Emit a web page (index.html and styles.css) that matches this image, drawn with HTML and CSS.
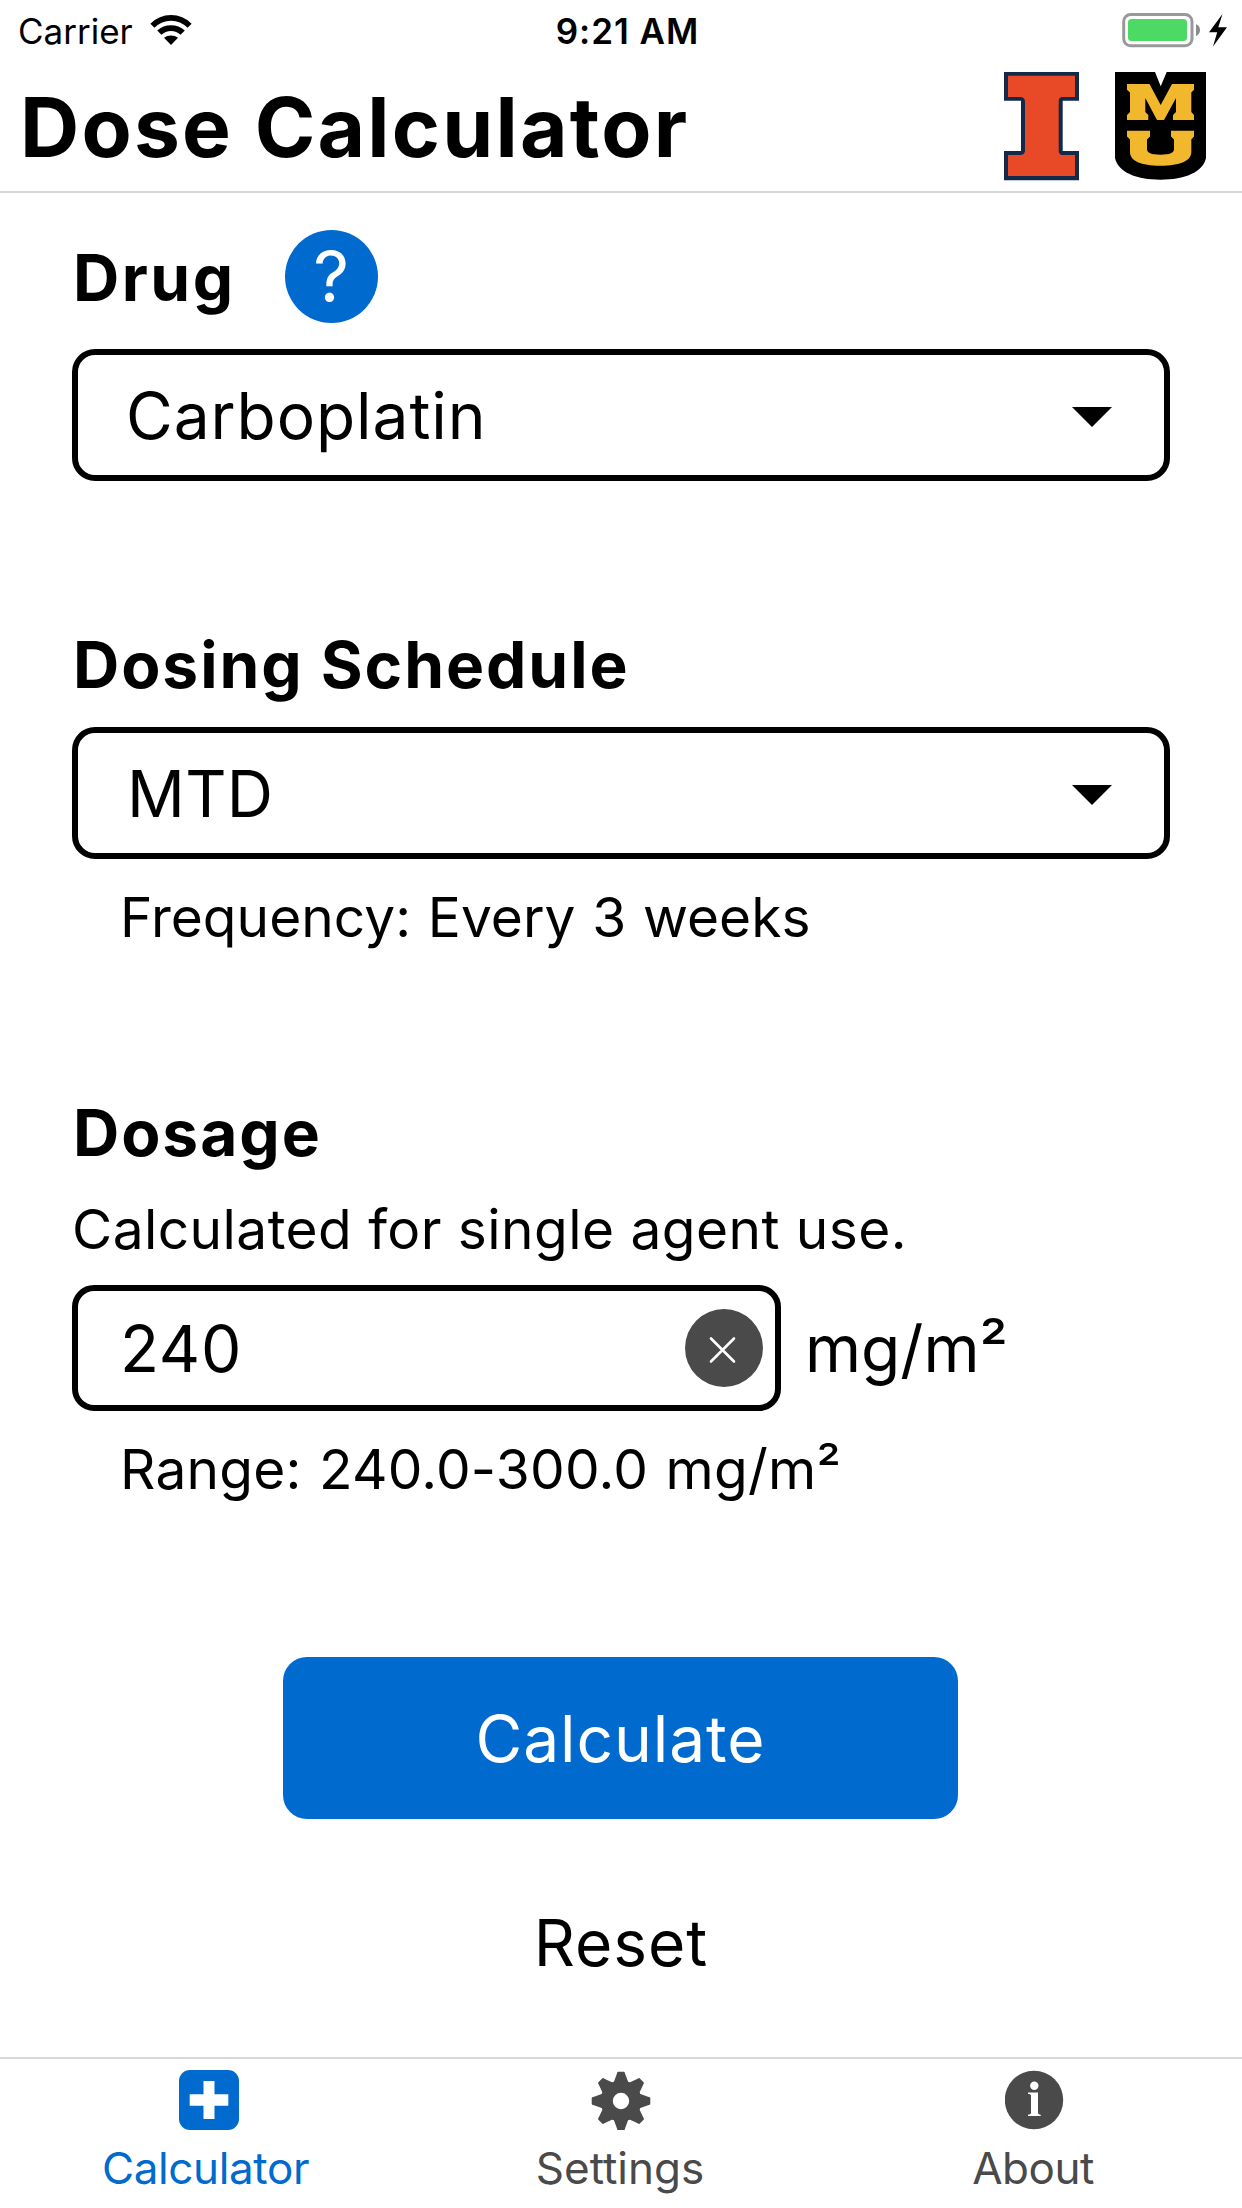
FILE: index.html
```
<!DOCTYPE html>
<html lang="en">
<head>
<meta charset="utf-8">
<title>Dose Calculator</title>
<link rel="stylesheet" href="styles.css">
</head>
<body>
<div class="status-bar">
  <div class="status-left">
    <span class="carrier">Carrier</span>
    <svg class="wifi" width="42" height="30" viewBox="0 0 42 30">
      <path d="M0.4 8.7Q9 0 21 0T41.600 8.700L37.600 12.800Q30.500 5.700 21 5.700T4.400 12.800Z"/>
      <path d="M7.200 15.600Q13 10.300 21 10.300T34.800 15.600L30.600 19.800Q26.600 16 21 16T11.400 19.800Z"/>
      <path d="M14 22.700Q17 20.600 21 20.600T28 22.700L21 30Z"/>
    </svg>
  </div>
  <span class="clock">9:21 AM</span>
  <div class="status-right">
    <svg width="105" height="36" viewBox="0 0 105 36">
      <rect x="1.700" y="2.500" width="68.300" height="31.300" rx="7" fill="none" stroke="#999" stroke-width="3"/>
      <rect x="6" y="7" width="59" height="22" rx="3.500" fill="#4cd964"/>
      <path d="M74 12q4 2 4 6t-4 6z" fill="#8a8a8a"/>
      <path d="M100.500 2L87 20.200h8.200L91 34.500L105 15.200h-8.700z"/>
    </svg>
  </div>
</div>

<header class="header">
  <h1 class="title">Dose Calculator</h1>
  <div class="logos">
    <svg width="75" height="109" viewBox="0 0 75 109">
      <path fill="#13294b" d="M0 0H75V28.700H58.700V79H75V108.300H0V79H17V28.700H0Z"/>
      <path fill="#e84a27" d="M4 3.700H71V25H58Q54.700 25.500 54.700 29V79Q55 82.700 58 83H71V104H4V83H17Q20.700 82.500 21 79V29Q20.500 25.500 17 25H4Z"/>
    </svg>
    <svg width="91" height="108" viewBox="0 0 91 108">
      <path d="M0 0H40L45.700 14.300L51.700 0H91V86C88 100 70 107.700 45.500 107.700S3 100 0 86Z"/>
      <path fill="#f1b82d" d="M12 12H34.500L45.700 33L57 12H79V17.700L76.300 20.500V40L79 43V48H58V43L61 40V26L49 48H42L30.300 26V40L33.300 43V48H12V43L15 40V20.500L12 17.700Z"/>
      <path fill="#f1b82d" d="M12 58.700H35V64.500L32 67.500V77C32 81 36 82.700 45.500 82.700S59 81 59 77V67.500L56 64.500V58.700H79V64.500L76.300 67.500V80C76.300 89 65 93.700 45.500 93.700S15 89 15 80V67.500L12 64.500Z"/>
    </svg>
  </div>
</header>

<main class="form">
  <div class="drug-row">
    <h2 class="label label-drug">Drug</h2>
    <button class="help">?</button>
  </div>
  <div class="select select-drug">
    <span class="value-drug">Carboplatin</span>
    <svg width="40" height="20" viewBox="0 0 40 20"><path d="M0 0H40L20 20Z"/></svg>
  </div>

  <h2 class="label label-schedule">Dosing Schedule</h2>
  <div class="select select-schedule">
    <span>MTD</span>
    <svg width="40" height="20" viewBox="0 0 40 20"><path d="M0 0H40L20 20Z"/></svg>
  </div>
  <p class="hint">Frequency: Every 3 weeks</p>

  <h2 class="label label-dosage">Dosage</h2>
  <p class="note">Calculated for single agent use.</p>
  <div class="dosage-row">
    <div class="input">
      <span class="amount">240</span>
      <svg width="78" height="78" viewBox="0 0 78 78">
        <circle cx="39" cy="39" r="39" fill="#4a4a4a"/>
        <path d="M26 29.500L49 52.500M49 29.500L26 52.500" stroke="#fff" stroke-width="2.600" stroke-linecap="round"/>
      </svg>
    </div>
    <span class="unit">mg/m²</span>
  </div>
  <p class="hint hint-range">Range: 240.0-300.0 mg/m²</p>

  <button class="calculate">Calculate</button>
  <button class="reset">Reset</button>
</main>

<nav class="tabs">
  <a class="tab tab-active">
    <svg width="60" height="60" viewBox="0 0 60 60">
      <rect width="60" height="60" rx="11" fill="#006ace"/>
      <path fill="#fff" d="M24.500 11H35.500V24.300H49.300V35.700H35.500V49H24.500V35.700H10.700V24.300H24.500Z"/>
    </svg>
    <span class="tab-calculator">Calculator</span>
  </a>
  <a class="tab">
    <svg width="60" height="60" viewBox="-30 -31 60 60">
      <defs><path id="tooth" d="M-7.500 -18L-4.200 -27Q-3.700 -29.300 -3 -29.300H3Q3.700 -29.300 4.200 -27L7.500 -18Z"/></defs>
      <g fill="#4a4a4a">
        <path fill-rule="evenodd" d="M-20.500 0A20.500 20.500 0 1 0 20.500 0A20.500 20.500 0 1 0 -20.500 0ZM-8.200 0A8.200 8.200 0 1 1 8.200 0A8.200 8.200 0 1 1 -8.200 0Z"/>
        <use href="#tooth"/><use href="#tooth" transform="rotate(45)"/><use href="#tooth" transform="rotate(90)"/><use href="#tooth" transform="rotate(135)"/>
        <use href="#tooth" transform="rotate(180)"/><use href="#tooth" transform="rotate(225)"/><use href="#tooth" transform="rotate(270)"/><use href="#tooth" transform="rotate(315)"/>
      </g>
    </svg>
    <span class="tab-settings">Settings</span>
  </a>
  <a class="tab">
    <svg width="60" height="60" viewBox="0 0 60 60">
      <circle cx="29" cy="30" r="29.200" fill="#4a4a4a"/>
      <circle cx="29.300" cy="15.700" r="4.200" fill="#fff"/>
      <path fill="#fff" d="M23 22.500H33V43.300Q33.500 44.500 35.700 44.800V46H23V44.800Q25.500 44.500 26 43.300V25.300Q25.500 24 23 23.800Z"/>
    </svg>
    <span class="tab-about">About</span>
  </a>
</nav>
</body>
</html>
```
FILE: styles.css
```
* { box-sizing: border-box; margin: 0; }

body {
  display: flex;
  flex-direction: column;
  height: 2208px;
  background: #fff;
  color: #000;
  font-family: Inter, "Liberation Sans", sans-serif;
}

svg { display: block; flex: none; }

button {
  border: 0;
  padding: 0;
  background: none;
  color: inherit;
  font: inherit;
}

.status-bar {
  display: grid;
  grid-template-columns: 1fr auto 1fr;
  height: 62px;
  line-height: 62px;
  font-size: 35px;
}
.status-left { display: flex; gap: 17px; padding-left: 18px; }
.wifi { margin-top: 15px; }
.clock { padding-left: 13px; font-weight: 600; letter-spacing: 1px; }
.status-right { display: flex; justify-content: flex-end; padding: 12px 15px 0 0; }

.header {
  display: flex;
  justify-content: space-between;
  align-items: flex-start;
  height: 131px;
  padding: 0 36px 0 20px;
  border-bottom: 2px solid #d8d8d8;
}
.title {
  margin-top: 18px;
  line-height: 96px;
  font-size: 82px;
  font-weight: 700;
  letter-spacing: 2.2px;
}
.logos { display: flex; gap: 36px; margin-top: 10px; }

.form {
  display: flex;
  flex-direction: column;
  flex: 1;
  padding: 36px 72px 0;
  font-size: 64px;
}

.label {
  padding-left: 1px;
  line-height: 80px;
  font-size: 64px;
  font-weight: 700;
  letter-spacing: 1.95px;
}
.drug-row { display: flex; align-items: center; gap: 49px; height: 94px; }
.label-drug { padding-top: 3px; letter-spacing: 2.5px; }
.help {
  width: 93px;
  height: 93px;
  border-radius: 50%;
  background: #006ace;
  color: #fff;
  line-height: 93px;
  font-size: 70px;
}

.select {
  display: flex;
  align-items: center;
  justify-content: space-between;
  height: 132px;
  padding: 0 52px 0 49px;
  border: 6px solid #000;
  border-radius: 23px;
}
.select svg { margin-top: 3px; }
.select-drug { margin-top: 26px; }
.value-drug { margin-left: -1px; letter-spacing: 0.93px; }
.label-schedule { margin-top: 144px; }
.select-schedule { margin-top: 22px; letter-spacing: 0.34px; }

.hint {
  margin-top: 23px;
  padding-left: 48px;
  line-height: 70px;
  font-size: 55px;
  letter-spacing: 0.05px;
  word-spacing: 1.2px;
}
.hint-range { letter-spacing: 0.25px; word-spacing: 1.6px; }

.label-dosage { margin-top: 141px; }
.note {
  margin-top: 21px;
  line-height: 70px;
  font-size: 55px;
  letter-spacing: 0.45px;
}
.dosage-row { display: flex; align-items: center; gap: 24px; margin-top: 21px; }
.input {
  display: flex;
  align-items: center;
  justify-content: space-between;
  width: 709px;
  height: 126px;
  padding: 0 12px 0 42px;
  border: 6px solid #000;
  border-radius: 22px;
}
.amount { letter-spacing: 0.8px; }

.calculate {
  align-self: center;
  width: 675px;
  height: 162px;
  margin: 153px 1px 0 0;
  border-radius: 24px;
  background: #006ace;
  color: #fff;
  letter-spacing: 0.93px;
}
.reset {
  align-self: center;
  margin-top: 84px;
  line-height: 80px;
  letter-spacing: 0.96px;
}

.tabs {
  display: grid;
  grid-template-columns: repeat(3, 1fr);
  height: 151px;
  border-top: 2px solid #d8d8d8;
  color: #4a4a4a;
  font-size: 44px;
}
.tab {
  display: flex;
  flex-direction: column;
  align-items: center;
  gap: 12px;
  padding-top: 11px;
  line-height: 52px;
}
.tab-active { padding-left: 3px; color: #006ace; }
.tab-calculator { margin-left: -6px; letter-spacing: -0.37px; }
.tab-settings { margin-left: -2px; }
.tab-about { margin-left: -4px; letter-spacing: -0.5px; }
```
